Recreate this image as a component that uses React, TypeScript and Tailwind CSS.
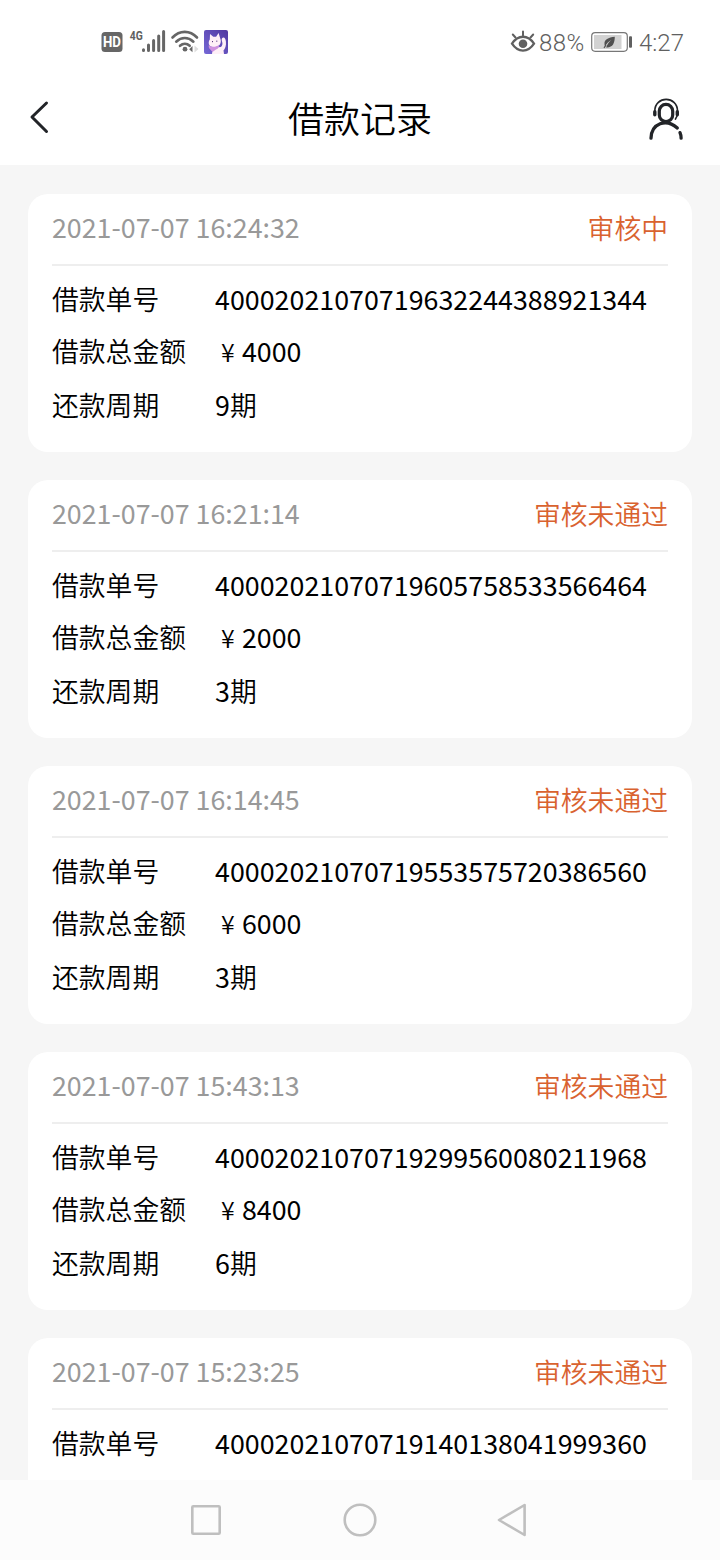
const records = [
  { time: '2021-07-07 16:24:32', status: '审核中', id: '40002021070719632244388921344', amount: '4000', period: 9 },
  { time: '2021-07-07 16:21:14', status: '审核未通过', id: '40002021070719605758533566464', amount: '2000', period: 3 },
  { time: '2021-07-07 16:14:45', status: '审核未通过', id: '40002021070719553575720386560', amount: '6000', period: 3 },
  { time: '2021-07-07 15:43:13', status: '审核未通过', id: '40002021070719299560080211968', amount: '8400', period: 6 },
  { time: '2021-07-07 15:23:25', status: '审核未通过', id: '40002021070719140138041999360', amount: '', period: 0 },
];

type LoanRecord = (typeof records)[number];

function StatusIcons() {
  return (
    <svg width="130" height="30" viewBox="100 27 130 30" fill="none">
      <rect x="101.500" y="32" width="21" height="20" rx="3.500" fill="#666" />
      <text x="112" y="47.200" textAnchor="middle" fill="#fff" fontSize="14.500" fontWeight="700" textLength="18" lengthAdjust="spacingAndGlyphs" fontFamily="Roboto, sans-serif">HD</text>
      <text x="129.700" y="39.800" fill="#606060" fontSize="13" fontWeight="700" textLength="13" lengthAdjust="spacingAndGlyphs" fontFamily="Roboto, sans-serif">4G</text>
      <path d="M143.500 49.800v.6M148.500 45v5.500M153.600 40.500v10M158.700 36v14.500M163.600 31.500v19" stroke="#666" strokeWidth="3" strokeLinecap="round" />
      <path d="M172.500 37.500c7-7.500 17.500-7.500 24.500 0M176.200 41.700c5.200-5 12-5 17.200 0M180 45.800c3-2.700 6.800-2.700 9.700 0" stroke="#666" strokeWidth="2.600" strokeLinecap="round" />
      <circle cx="185" cy="49.200" r="2.400" fill="#666" />
      <path d="M189.200 49.200l3.300-3.200v6.300z" fill="#666" />
      <path d="M194.500 45.500l4 3.500-4 3.500z" fill="#ddd" />
      <defs>
        <linearGradient id="tile" x1="204" y1="54" x2="228" y2="30" gradientUnits="userSpaceOnUse">
          <stop stopColor="#7568d6" />
          <stop offset="1" stopColor="#5138a0" />
        </linearGradient>
      </defs>
      <rect x="204" y="30" width="24" height="24" rx="2" fill="url(#tile)" />
      <path d="M212 54c.2-2.500 1-5 3-6.500l6-.5c1.600-2 1.800-3.600 1-5.600-.7-2-.2-3.900 1.200-4 1.700-.1 2.500 1.800 2.700 4 .5 4.500-.9 7-2.400 9.100l.5 3.500z" fill="#fff0f7" />
      <path d="M209.500 45.500c-1.200-2-.9-4.500.3-6l.2-5.400 3.300 2.600h2.800l2.500-3.600 1.500 5c1.400 3 .7 6.400-1.600 8-2.800 1.600-7 1.400-9-.6z" fill="#fff0f7" />
      <path d="M208.800 45.300c3 2.200 7 2 10.200-.2.400 1.800-.5 3.700-3 4.300l-3.500 2.600-2-2.300c-1.500-1-2.100-2.800-1.700-4.400z" fill="#cf91df" />
      <path d="M212.500 41v1.200M216.800 40.600v1.200" stroke="#5c3b83" strokeWidth="1" />
    </svg>
  );
}

function EyeIcon() {
  return (
    <svg width="26" height="24" viewBox="510 29 26 24" fill="none" stroke="#606060" strokeWidth="2.300" strokeLinecap="round">
      <path d="M512 42.700c6-9.300 16-9.300 22 0-6 9.200-16 9.200-22 0z" />
      <circle cx="523" cy="42.700" r="4.300" fill="#606060" stroke="none" />
      <path d="M523 34.500v-4M515.500 36.500l-2.700-3M530.500 36.500l2.700-3" strokeWidth="2" />
    </svg>
  );
}

function BatteryIcon() {
  return (
    <svg width="42" height="22" viewBox="591 31 42 22" fill="none">
      <rect x="591.700" y="32.700" width="35.600" height="18.600" rx="3.500" stroke="#777" strokeWidth="1.200" />
      <rect x="594" y="35" width="27.500" height="14" fill="#d2d2d2" />
      <path d="M614.800 36.800c-6.500.8-10.700 2.500-10.300 7.600.1.900.4 1.500.8 2 1-3 3.200-5 6-6.500-2.300 2-4 4.300-5.200 7.500 6.600.5 8.600-4 8.700-10.600z" fill="#505050" />
      <path d="M606 45l-2 2.800" stroke="#505050" strokeWidth="1.200" />
      <rect x="629" y="36.200" width="3" height="11.600" rx="1" fill="#606060" />
    </svg>
  );
}

function ServiceIcon() {
  return (
    <svg width="36" height="44" viewBox="648 97 36 44" fill="none" stroke="#222428" strokeLinecap="round">
      <rect x="659.300" y="104.300" width="13.400" height="17.300" rx="6.700" strokeWidth="3.200" />
      <path d="M654.800 112v-1c0-15.500 22.700-15.500 22.700 0v1c0 3-.6 5.300-2 7" strokeWidth="1.700" />
      <path d="M654.800 111.800v3M677.300 111.800v3" strokeWidth="3.400" />
      <path d="M651 138.200c.5-14.800 15-20.300 26.300-10.200M680 132.600c.8 1.800 1.100 3.700 1.100 5.600" strokeWidth="3.300" />
    </svg>
  );
}

function RecordCard({ record }: { record: LoanRecord }) {
  return (
    <article className="h-[258px] shrink-0 rounded-[20px] bg-white px-6 text-[26.8px] leading-[40px] font-[350]">
      <div className="flex h-[72px] items-center justify-between border-b-2 border-[#eee] pb-1">
        <time className="font-normal text-[#999]">{record.time}</time>
        <span className="pt-px text-[#d9622f]">{record.status}</span>
      </div>
      <dl className="grid grid-cols-[163px_1fr] pt-[13px] text-black">
        <dt className="h-[52px]">借款单号</dt>
        <dd className="font-normal tracking-[0.025px]">{record.id}</dd>
        {record.amount && (
          <>
            <dt className="h-[54px]">借款总金额</dt>
            <dd className="flex font-normal">
              <span className="w-[27px] pl-[6px] text-[25px] font-[350]">¥</span>
              {record.amount}
            </dd>
            <dt>还款周期</dt>
            <dd>
              <span className="font-normal">{record.period}</span>期
            </dd>
          </>
        )}
      </dl>
    </article>
  );
}

export default function App() {
  return (
    <div className="flex h-[1560px] w-[720px] flex-col overflow-hidden bg-[#f6f6f6] font-['Noto_Sans_CJK_SC',sans-serif]">
      <div className="flex h-[84px] shrink-0 items-center justify-between bg-white pr-9 pl-[100px]">
        <StatusIcons />
        <div className="flex items-center font-[Roboto,sans-serif] text-[24px] leading-[30px] text-[#606060]">
          <EyeIcon />
          <span className="ml-[3px] w-[52px] pt-px font-light tracking-[0.4px]">88%</span>
          <BatteryIcon />
          <span className="ml-[6px] pt-px font-light">4:27</span>
        </div>
      </div>
      <header className="flex h-[81px] shrink-0 items-center justify-between bg-white pr-9 pb-4 pl-[29px]">
        <svg width="36" height="36" viewBox="29 99 36 36" fill="none" stroke="#222428" strokeWidth="3" strokeLinecap="round" strokeLinejoin="round">
          <path d="M46.500 103L32 117l14.500 14.500" />
        </svg>
        <h1 className="pl-[7px] text-[36px] leading-[54px] font-[350] text-black">借款记录</h1>
        <div className="pt-[5px]">
          <ServiceIcon />
        </div>
      </header>
      <main className="flex min-h-0 flex-1 flex-col gap-7 overflow-hidden px-7 pt-[29px]">
        {records.map((record) => (
          <RecordCard key={record.id} record={record} />
        ))}
      </main>
      <nav className="flex h-20 shrink-0 items-center bg-[#fcfcfc] pl-[190px]">
        <svg width="338" height="36" viewBox="190 1502 338 36" fill="none" stroke="#bfbfbf" strokeWidth="2.600" strokeLinejoin="round">
          <rect x="192.300" y="1506.300" width="27.400" height="27.400" rx="1" />
          <circle cx="360" cy="1520" r="15.300" />
          <path d="M524.600 1505v30L499 1520z" />
        </svg>
      </nav>
    </div>
  );
}
